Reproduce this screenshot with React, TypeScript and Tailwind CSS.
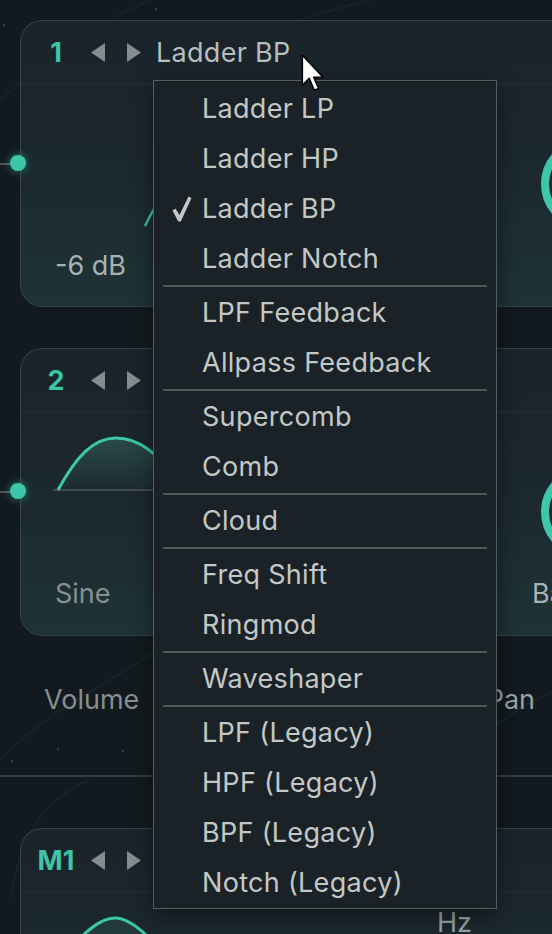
import React from 'react';

type Item = { label: string; checked?: boolean } | 'sep';

const items: Item[] = [
  { label: 'Ladder LP' },
  { label: 'Ladder HP' },
  { label: 'Ladder BP', checked: true },
  { label: 'Ladder Notch' },
  'sep',
  { label: 'LPF Feedback' },
  { label: 'Allpass Feedback' },
  'sep',
  { label: 'Supercomb' },
  { label: 'Comb' },
  'sep',
  { label: 'Cloud' },
  'sep',
  { label: 'Freq Shift' },
  { label: 'Ringmod' },
  'sep',
  { label: 'Waveshaper' },
  'sep',
  { label: 'LPF (Legacy)' },
  { label: 'HPF (Legacy)' },
  { label: 'BPF (Legacy)' },
  { label: 'Notch (Legacy)' },
];

function Arrows() {
  return (
    <div className="flex items-center gap-[22px]">
      <svg width="14" height="19" viewBox="0 0 14 19">
        <path d="M14 0 L0 9.5 L14 19 Z" fill="#868d8e" />
      </svg>
      <svg width="14" height="19" viewBox="0 0 14 19">
        <path d="M0 0 L14 9.5 L0 19 Z" fill="#868d8e" />
      </svg>
    </div>
  );
}

// connector dot hanging over the left edge of a panel
function Dot() {
  return (
    <>
      <div className="absolute left-[-21px] top-[142px] h-[2px] w-[14px] bg-[#4a5457]" />
      <div className="absolute left-[-11px] top-[134px] h-[16px] w-[16px] rounded-full bg-[#3ec6aa] shadow-[0_0_8px_rgba(62,198,170,0.6)]" />
    </>
  );
}

function Knob() {
  return <div className="ml-[20px] mt-[54px] h-[92px] w-[92px] shrink-0 rounded-full border-[8px] border-[#3ec6aa]" />;
}

function Panel({
  label,
  name,
  children,
  className = '',
}: {
  label: string;
  name?: string;
  children?: React.ReactNode;
  className?: string;
}) {
  return (
    <div
      className={`relative flex w-[560px] shrink-0 flex-col rounded-[22px] border border-[#374246] bg-gradient-to-b from-[#1a232a] via-[#1b282e] to-[#1e3336] ${className}`}
    >
      <div className="flex h-[62px] shrink-0 items-center pl-[10px]">
        <div className="w-[50px] text-center text-[27px] font-bold leading-none text-[#3fc4a8]">{label}</div>
        <div className="ml-[10px]">
          <Arrows />
        </div>
        {name && <div className="ml-[15px] text-[27px] leading-none tracking-[0.3px] text-[#b7bebd]">{name}</div>}
      </div>
      <div className="flex flex-1 flex-col border-t border-[#242f36]">{children}</div>
    </div>
  );
}

function Label({ children, tone = 'text-[#a9b1b1]', className = '' }: { children: React.ReactNode; tone?: string; className?: string }) {
  return <div className={`shrink-0 text-[27px] leading-[32px] ${tone} ${className}`}>{children}</div>;
}

function Check() {
  return (
    <svg width="20" height="26" viewBox="0 0 20 26">
      <path d="M0.5 14.5 L3.5 12.5 L7.5 19 L16.5 0.5 L19.5 2 L8.8 25.5 L6.2 25.5 Z" fill="#c2c8c6" />
    </svg>
  );
}

function Cursor() {
  return (
    <svg className="absolute left-[301px] top-[54px]" width="24" height="40" viewBox="0 0 19 32">
      <path
        d="M1 1 L1 25 L6.5 19.5 L10.5 29 L14 27.5 L10 18.5 L17.5 18.5 Z"
        fill="#ffffff"
        stroke="#000000"
        strokeWidth="1.2"
        strokeLinejoin="round"
      />
    </svg>
  );
}

export default function App() {
  return (
    <div className="relative h-[934px] w-[552px] overflow-hidden bg-[#121a1f] font-['Inter','Noto_Sans',sans-serif]">
      {/* faint background strokes */}
      <svg className="absolute inset-0" width="552" height="934" viewBox="0 0 552 934">
        <g stroke="#17222700" strokeWidth="2" fill="none" />
        <g stroke="#172328" strokeWidth="2" fill="none">
          <path d="M-20 120 C 60 40, 120 10, 200 -20" />
          <path d="M300 20 C 360 0, 420 -10, 480 -30" />
          <path d="M0 760 C 60 700, 120 680, 170 640" />
          <path d="M10 900 C 20 840, 40 800, 90 780" />
          <path d="M440 770 C 480 740, 520 700, 560 690" />
        </g>
        <circle cx="156" cy="9" r="1" fill="#2a5a52" />
        <circle cx="4" cy="25" r="1" fill="#2a5a52" />
        <circle cx="58" cy="749" r="1" fill="#2a5a52" />
        <circle cx="123" cy="751" r="1" fill="#2a5a52" />
        <circle cx="12" cy="761" r="1" fill="#2a5a52" />
      </svg>

      <div className="relative flex flex-col pl-[20px] pt-[20px]">
        {/* Filter 1 */}
        <Panel label="1" name="Ladder BP" className="h-[287px]">
          <Dot />
          <div className="flex h-[166px]">
            <svg className="shrink-0" width="500" height="166" viewBox="0 0 500 166">
              <path d="M124 142 C 127 136, 130 130, 134 123" stroke="#3ec6aa" strokeWidth="2.5" fill="none" />
            </svg>
            <Knob />
          </div>
          <div className="flex pl-[34px]">
            <Label>-6 dB</Label>
          </div>
        </Panel>

        {/* Filter 2 */}
        <Panel label="2" className="mt-[41px] h-[288px]">
          <Dot />
          <div className="flex h-[166px]">
            <svg className="shrink-0" width="500" height="166" viewBox="0 0 500 166">
              <defs>
                <linearGradient id="sineFill" x1="0" y1="0" x2="0" y2="1">
                  <stop offset="0" stopColor="#2a4a48" />
                  <stop offset="1" stopColor="#1c2b30" />
                </linearGradient>
              </defs>
              <path d="M37 78 C 55 45, 72 26, 95 26 C 118 26, 135 40, 160 72 L160 78 Z" fill="url(#sineFill)" />
              <line x1="32" y1="78" x2="200" y2="78" stroke="#424c50" strokeWidth="2" />
              <path d="M37 78 C 55 45, 72 26, 95 26 C 118 26, 135 40, 160 72" stroke="#3ec6aa" strokeWidth="3" fill="none" />
            </svg>
            <Knob />
          </div>
          <div className="flex pl-[34px]">
            <Label tone="text-[#87918f]" className="w-[477px]">
              Sine
            </Label>
            <Label>Band</Label>
          </div>
        </Panel>

        {/* Volume / Pan row */}
        <div className="flex h-[128px] items-center justify-between pr-[17px]">
          <Label tone="text-[#868f8f]" className="ml-[24px]">
            Volume
          </Label>
          <Label tone="text-[#9aa2a2]">Pan</Label>
        </div>
        <div className="ml-[-20px] mt-[11px] h-[2px] w-[552px] bg-[#343d41]" />

        {/* Mod 1 */}
        <Panel label="M1" className="mt-[51px] h-[200px]">
          <div className="flex">
            <svg className="shrink-0" width="416" height="60" viewBox="0 0 416 60">
              <path d="M55 50 C 70 35, 82 26, 94 26 C 106 26, 118 35, 132 50 L132 60 L55 60 Z" fill="#223a3a" />
              <path d="M55 50 C 70 35, 82 26, 94 26 C 106 26, 118 35, 132 50" stroke="#3ec6aa" strokeWidth="3" fill="none" />
            </svg>
            <Label tone="text-[#9aa2a2]" className="mt-[15px]">
              Hz
            </Label>
          </div>
        </Panel>
      </div>

      {/* dropdown menu */}
      <div className="absolute left-[153px] top-[80px] w-[344px] border border-[#545c5f] bg-[#1b2227] pt-[3px] shadow-[0_6px_20px_rgba(0,0,0,0.45)]">
        {items.map((it, i) =>
          it === 'sep' ? (
            <div key={i} className="flex h-[4px] items-center px-[9px]">
              <div className="h-[2px] w-full bg-[#50585b]" />
            </div>
          ) : (
            <div key={i} className="flex h-[50px] items-center pl-[18px] text-[27px] tracking-[0.3px] text-[#c2c8c6]">
              <div className="flex w-[30px] items-center">{it.checked && <Check />}</div>
              {it.label}
            </div>
          ),
        )}
      </div>

      <Cursor />
    </div>
  );
}
